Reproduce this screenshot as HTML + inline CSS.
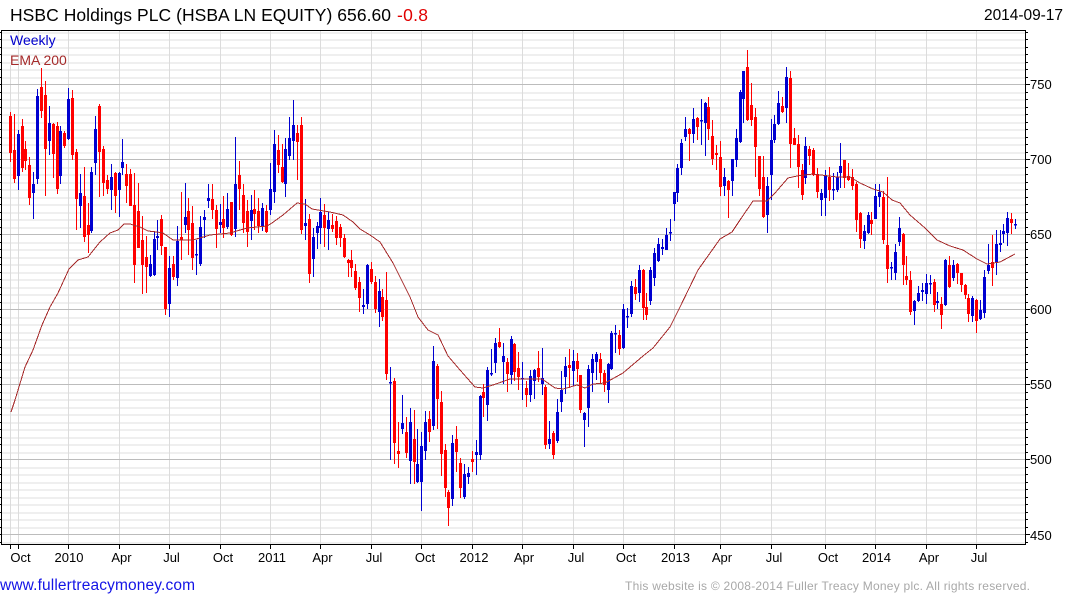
<!DOCTYPE html>
<html><head><meta charset="utf-8"><title>HSBC Holdings PLC</title>
<style>html,body{margin:0;padding:0;background:#fff;width:1075px;height:600px;overflow:hidden}svg{display:block;font-family:"Liberation Sans",Arial,sans-serif}</style>
</head><body>
<svg width="1075" height="600" viewBox="0 0 1075 600" xmlns="http://www.w3.org/2000/svg">
<rect width="1075" height="600" fill="#fff"/>
<!-- minor horizontal grid -->
<path shape-rendering="crispEdges" fill="none" stroke="#efefef" stroke-width="2" d="M2 33H1025M2 40H1025M2 48H1025M2 55H1025M2 63H1025M2 70H1025M2 78H1025M2 93H1025M2 100H1025M2 108H1025M2 115H1025M2 123H1025M2 130H1025M2 138H1025M2 145H1025M2 153H1025M2 168H1025M2 175H1025M2 183H1025M2 190H1025M2 198H1025M2 205H1025M2 213H1025M2 220H1025M2 228H1025M2 243H1025M2 250H1025M2 258H1025M2 265H1025M2 273H1025M2 280H1025M2 288H1025M2 295H1025M2 303H1025M2 318H1025M2 325H1025M2 333H1025M2 340H1025M2 348H1025M2 355H1025M2 363H1025M2 370H1025M2 378H1025M2 393H1025M2 400H1025M2 408H1025M2 415H1025M2 423H1025M2 430H1025M2 438H1025M2 445H1025M2 453H1025M2 468H1025M2 475H1025M2 483H1025M2 490H1025M2 498H1025M2 505H1025M2 513H1025M2 520H1025M2 528H1025M2 543H1025"/>
<!-- vertical grid -->
<path shape-rendering="crispEdges" fill="none" stroke="#dcdcdc" stroke-width="1" d="M10.5 65V544M18.5 31V544M68.5 31V544M119.5 31V544M169.5 31V544M220.5 31V544M270.5 31V544M320.5 31V544M371.5 31V544M421.5 31V544M472.5 31V544M522.5 31V544M573.5 31V544M623.5 31V544M674.5 31V544M720.5 31V544M771.5 31V544M825.5 31V544M875.5 31V544M926.5 31V544M976.5 31V544"/>
<!-- major horizontal grid -->
<path shape-rendering="crispEdges" fill="none" stroke="#bcbcbc" stroke-width="1" d="M2 84.5H1025M2 159.5H1025M2 234.5H1025M2 309.5H1025M2 384.5H1025M2 459.5H1025M2 534.5H1025"/>
<!-- wicks -->
<path shape-rendering="crispEdges" fill="none" stroke="#0000d0" stroke-width="1" d="M18.5 130V190M33.5 172V219M37.5 89V184M49.5 106V155M60.5 126V184M68.5 88V140M80.5 174V228M91.5 167V233M95.5 116V175M111.5 164V210M119.5 172V217M122.5 139V175M150.5 255V277M154.5 232V276M157.5 220V250M169.5 256V317M177.5 226V286M185.5 183V233M196.5 240V275M200.5 216V266M204.5 210V238M208.5 184V208M220.5 204V233M227.5 193V229M235.5 137V237M251.5 195V240M262.5 203V231M270.5 163V215M274.5 130V203M285.5 138V197M289.5 117V160M293.5 100V160M305.5 199V240M313.5 228V277M317.5 222V249M320.5 198V244M328.5 212V250M363.5 289V314M367.5 264V309M379.5 279V327M390.5 367V460M402.5 395V434M410.5 408V484M417.5 429V483M421.5 432V511M425.5 411V460M433.5 346V430M452.5 435V506M464.5 464V499M468.5 467V484M476.5 440V475M480.5 395V460M487.5 367V421M491.5 349V376M495.5 338V373M503.5 343V384M511.5 336V384M522.5 362V400M530.5 370V402M534.5 369V399M542.5 348V395M549.5 421V449M557.5 399V443M561.5 371V412M565.5 357V394M573.5 350V386M584.5 412V447M588.5 365V427M592.5 354V392M596.5 352V380M608.5 363V403M611.5 331V370M615.5 325V353M623.5 304V349M627.5 308V328M631.5 281V317M639.5 265V302M650.5 267V305M654.5 248V286M658.5 238V262M662.5 239V255M666.5 228V250M670.5 219V241M674.5 192V221M677.5 164V202M681.5 139V175M685.5 117V141M693.5 108V143M701.5 99V145M705.5 102V156M724.5 168V196M732.5 159V196M736.5 129V167M740.5 90V143M743.5 71V123M767.5 177V233M771.5 119V200M774.5 115V143M778.5 91V125M786.5 67V123M805.5 137V184M821.5 189V216M825.5 170V216M833.5 173V200M837.5 172V192M840.5 143V188M864.5 225V249M868.5 212V234M875.5 184V219M879.5 184V207M891.5 262V280M895.5 244V280M899.5 217V246M914.5 300V325M918.5 286V302M922.5 283V301M926.5 274V304M930.5 275V294M937.5 292V309M945.5 259V306M953.5 260V281M972.5 296V322M980.5 300V320M984.5 270V318M988.5 244V274M996.5 230V275M1000.5 230V252M1003.5 224V243M1007.5 212V246M1015.5 219V229"/>
<path shape-rendering="crispEdges" fill="none" stroke="#ff0000" stroke-width="1" d="M10.5 112V162M14.5 114V183M22.5 119V172M25.5 141V170M29.5 157V205M41.5 68V118M45.5 81V196M53.5 123V178M57.5 122V194M64.5 131V148M72.5 90V160M76.5 149V230M84.5 167V242M88.5 203V253M99.5 104V197M103.5 146V196M107.5 175V194M115.5 172V213M126.5 164V203M130.5 169V206M134.5 173V283M138.5 183V248M142.5 216V294M146.5 236V293M161.5 215V255M165.5 247V315M173.5 256V280M181.5 192V260M188.5 198V255M192.5 206V270M212.5 184V219M216.5 205V248M223.5 196V238M231.5 202V236M239.5 161V210M243.5 184V233M247.5 200V247M254.5 190V230M258.5 198V233M266.5 205V233M278.5 135V173M282.5 144V183M297.5 125V180M301.5 117V234M309.5 214V283M324.5 204V247M332.5 214V232M336.5 216V245M340.5 224V247M344.5 234V258M348.5 259V277M351.5 250V277M355.5 264V290M359.5 277V312M371.5 262V284M375.5 276V313M382.5 289V321M386.5 272V380M394.5 378V464M398.5 422V468M406.5 417V458M414.5 410V484M429.5 411V442M437.5 364V429M441.5 391V476M445.5 444V497M448.5 490V526M456.5 426V472M460.5 458V498M472.5 451V472M483.5 384V417M499.5 328V348M507.5 358V392M514.5 343V381M518.5 352V390M526.5 381V407M538.5 351V382M545.5 385V449M553.5 431V459M569.5 349V388M577.5 353V382M580.5 375V413M600.5 353V384M604.5 370V392M619.5 330V355M635.5 279V300M643.5 269V320M646.5 293V320M689.5 128V161M697.5 117V140M708.5 97V140M712.5 120V165M716.5 145V170M720.5 141V196M728.5 180V218M747.5 50V121M751.5 83V126M755.5 108V177M759.5 156V196M763.5 156V218M782.5 97V113M790.5 71V168M794.5 128V145M798.5 135V188M802.5 164V200M809.5 146V165M813.5 148V176M817.5 168V198M829.5 167V201M844.5 160V188M848.5 163V181M852.5 169V190M856.5 182V232M860.5 212V248M871.5 212V235M883.5 191V244M887.5 177V283M903.5 233V285M906.5 256V285M910.5 271V315M934.5 279V312M941.5 297V329M949.5 256V288M957.5 263V284M961.5 273V292M965.5 284V299M968.5 294V322M976.5 299V333M992.5 235V286M1011.5 213V234"/>
<!-- bodies -->
<path shape-rendering="crispEdges" fill="none" stroke="#0000d0" stroke-width="3" d="M18.5 134V176M33.5 184V193M37.5 96V179M49.5 123V141M60.5 131V176M68.5 99V139M80.5 193V206M91.5 172V231M95.5 129V163M111.5 177V190M119.5 173V190M122.5 162V168M150.5 264V276M154.5 239V275M157.5 236V238M169.5 268V304M177.5 241V278M185.5 217V225M196.5 254V255.5M200.5 227V264M204.5 217V220M208.5 198V201M220.5 222V225M227.5 209V227M235.5 184V229M251.5 210V221M262.5 208V226M270.5 189V210M274.5 144V192M285.5 149V184M289.5 138V156M293.5 125V141M305.5 223V226M313.5 237V259M317.5 226V233M320.5 212V228M328.5 220V229M363.5 305V307M367.5 265V304M379.5 291V312M390.5 382V383.5M402.5 423V429M410.5 422V461M417.5 464V482M421.5 446V482M425.5 422V451M433.5 361V426M452.5 443V499M464.5 474V497M468.5 473V477M476.5 452V455M480.5 396V455M487.5 370V405M491.5 373V374.5M495.5 343V363M503.5 356V362M511.5 339V375M522.5 378V379.5M530.5 376V395M534.5 370V381M542.5 378V384M549.5 439V444M557.5 412V441M561.5 390V402M565.5 366V377M573.5 361V371M584.5 413V420M588.5 369V408M592.5 359V373M596.5 354V362M608.5 364V390M611.5 333V369M615.5 333V334.5M623.5 309V348M627.5 316V317.5M631.5 286V314M639.5 270V293M650.5 270V301M654.5 253V278M658.5 244V261M662.5 247V249M666.5 235V250M670.5 232V233.5M674.5 192V204M677.5 168V193M681.5 143V168M685.5 129V137M693.5 119V134M701.5 120V121.5M705.5 103V123M724.5 177V186M732.5 159V181M736.5 138V160M740.5 92V142M743.5 71V99M767.5 186V215M771.5 140V175M774.5 124V140M778.5 103V124M786.5 77V108M805.5 146V178M821.5 193V200M825.5 175V198M833.5 189V190.5M837.5 177V190M840.5 166V173M864.5 231V241M868.5 215V233M875.5 196V219M879.5 192V197M891.5 267V268.5M895.5 252V273M899.5 228V242M914.5 301V311M918.5 293V301M922.5 290V292M926.5 283V294M930.5 283V284.5M937.5 301V303M945.5 260V305M953.5 265V278M972.5 298V316M980.5 310V319M984.5 277V313M988.5 265V271M996.5 244V262M1000.5 243V245M1003.5 231V234M1007.5 218V233M1015.5 224V225.5"/>
<path shape-rendering="crispEdges" fill="none" stroke="#ff0000" stroke-width="3" d="M10.5 116V153M14.5 150V179M22.5 126V168M25.5 149V161M29.5 165V198M41.5 87V111M45.5 95V149M53.5 124V154M57.5 126V189M64.5 133V146M72.5 98V155M76.5 152V199M84.5 196V237M88.5 225V235M99.5 106V152M103.5 149V183M107.5 180V189M115.5 173V196M126.5 174V186M130.5 174V206M134.5 205V265M138.5 211V248M142.5 240V265M146.5 257V267M161.5 219V246M165.5 247V309M173.5 264V277M181.5 237V240M188.5 211V230M192.5 223V258M212.5 199V210M216.5 210V229M223.5 219V228M231.5 202V235M239.5 175V189M243.5 195V223M247.5 211V232M254.5 209V214M258.5 211V226M266.5 211V232M278.5 150V165M282.5 167V182M297.5 133V142M301.5 125V230M309.5 219V274M324.5 215V228M332.5 225V229M336.5 221V238M340.5 227V238M344.5 238V257M348.5 260V263M351.5 260V268M355.5 271V288M359.5 282V298M371.5 269V282M375.5 282V309M382.5 297V317M386.5 300V374M394.5 381V443M398.5 451V454M406.5 432V453M414.5 439V462M429.5 419V432M437.5 366V399M441.5 402V454M445.5 450V488M448.5 492V508M456.5 439V452M460.5 463V488M472.5 459V462M483.5 392V398M499.5 342V347M507.5 362V374M514.5 344V372M518.5 368V377M526.5 388V395M538.5 368V377M545.5 387V445M553.5 433V455M569.5 365V368M577.5 361V369M580.5 375V410M600.5 359V373M604.5 373V385M619.5 335V349M635.5 287V294M643.5 270V308M646.5 307V315M689.5 129V134M697.5 118V127M708.5 107V129M712.5 136V159M716.5 153V155M720.5 157V187M728.5 181V190M747.5 67V120M751.5 105V120M755.5 117V147M759.5 156V189M763.5 177V217M782.5 106V112M790.5 78V144M794.5 138V145M798.5 144V167M802.5 170V195M809.5 149V156M813.5 150V175M817.5 174V192M829.5 177V190M844.5 160V178M848.5 176V180M852.5 177V186M856.5 184V220M860.5 213V239M871.5 220V224M883.5 197V240M887.5 245V269M903.5 234V265M906.5 276V280M910.5 280V312M934.5 282V305M941.5 304V315M949.5 265V287M957.5 264V273M961.5 273V285M965.5 285V295M968.5 298V314M976.5 300V321M992.5 262V268M1011.5 219V223"/>
<!-- EMA -->
<polyline fill="none" stroke="#a52a2a" stroke-width="1" shape-rendering="crispEdges" points="11,412 15,400 25,367 33,350 42,325 50,307 58,293 69,269 78,260 88,257 100,242 110,233 118,230 124,224 130,224 140,227 148,231 157,232 163,233 173,240 193,240 210,235 230,233 247,228 267,226 272,223 283,215 297,203 305,204 312,209 330,212 343,215 353,222 360,229 370,235 380,242 393,263 410,297 418,317 428,330 438,335 448,356 460,370 475,387 483,388 493,385 510,379 542,379 555,388 563,389 577,385 585,388 593,384 605,383 623,373 643,356 653,348 670,327 680,307 698,270 720,239 732,232 740,220 753,201 767,201 775,193 788,178 797,176 813,174 837,177 850,177 860,183 873,189 883,192 892,200 900,203 910,215 925,228 937,240 950,246 963,250 977,259 987,264 1000,262 1015,254"/>
<!-- frame -->
<rect x="1.5" y="30.5" width="1024" height="514" fill="none" stroke="#000" stroke-width="1" shape-rendering="crispEdges"/>
<!-- ticks -->
<path id="t" shape-rendering="crispEdges" fill="none" stroke="#000" stroke-width="1" d="M0 32.5h2M0 39.5h2M0 47.5h2M0 54.5h2M0 62.5h2M0 69.5h2M0 77.5h2M0 84.5h2M0 92.5h2M0 99.5h2M0 107.5h2M0 114.5h2M0 122.5h2M0 129.5h2M0 137.5h2M0 144.5h2M0 152.5h2M0 159.5h2M0 167.5h2M0 174.5h2M0 182.5h2M0 189.5h2M0 197.5h2M0 204.5h2M0 212.5h2M0 219.5h2M0 227.5h2M0 234.5h2M0 242.5h2M0 249.5h2M0 257.5h2M0 264.5h2M0 272.5h2M0 279.5h2M0 287.5h2M0 294.5h2M0 302.5h2M0 309.5h2M0 317.5h2M0 324.5h2M0 332.5h2M0 339.5h2M0 347.5h2M0 354.5h2M0 362.5h2M0 369.5h2M0 377.5h2M0 384.5h2M0 392.5h2M0 399.5h2M0 407.5h2M0 414.5h2M0 422.5h2M0 429.5h2M0 437.5h2M0 444.5h2M0 452.5h2M0 459.5h2M0 467.5h2M0 474.5h2M0 482.5h2M0 489.5h2M0 497.5h2M0 504.5h2M0 512.5h2M0 519.5h2M0 527.5h2M0 534.5h2M0 542.5h2"/>
<use href="#t" x="1026"/>
<path shape-rendering="crispEdges" fill="none" stroke="#000" stroke-width="1" d="M1026 84.5h4M1026 159.5h4M1026 234.5h4M1026 309.5h4M1026 384.5h4M1026 459.5h4M1026 534.5h4M10.5 545v4M18.5 545v4M68.5 545v4M119.5 545v4M169.5 545v4M220.5 545v4M270.5 545v4M320.5 545v4M371.5 545v4M421.5 545v4M472.5 545v4M522.5 545v4M573.5 545v4M623.5 545v4M674.5 545v4M720.5 545v4M771.5 545v4M825.5 545v4M875.5 545v4M926.5 545v4M976.5 545v4"/>
<!-- title -->
<text x="10" y="21" font-size="17.5" fill="#000" textLength="381" lengthAdjust="spacing">HSBC Holdings PLC (HSBA LN EQUITY) 656.60</text>
<text x="397" y="21" font-size="17.5" fill="#e00000" textLength="31" lengthAdjust="spacing">-0.8</text>
<text x="984" y="20" font-size="15.5" fill="#000" textLength="79" lengthAdjust="spacing">2014-09-17</text>
<text x="10" y="45" font-size="14" fill="#0000cd">Weekly</text>
<text x="10" y="65" font-size="14" fill="#a52a2a">EMA 200</text>
<!-- y labels -->
<g font-size="13" fill="#000">
<text x="1030" y="89">750</text><text x="1030" y="164">700</text><text x="1030" y="239">650</text><text x="1030" y="314">600</text><text x="1030" y="389">550</text><text x="1030" y="464">500</text><text x="1030" y="540">450</text>
</g>
<!-- x labels -->
<g font-size="13" fill="#000" text-anchor="middle">
<text x="20.5" y="562">Oct</text><text x="69" y="562">2010</text><text x="121.5" y="562">Apr</text><text x="171.5" y="562">Jul</text><text x="223" y="562">Oct</text><text x="272" y="562">2011</text><text x="322.5" y="562">Apr</text><text x="374" y="562">Jul</text><text x="425" y="562">Oct</text><text x="474" y="562">2012</text><text x="524" y="562">Apr</text><text x="576" y="562">Jul</text><text x="626" y="562">Oct</text><text x="675.5" y="562">2013</text><text x="722" y="562">Apr</text><text x="774" y="562">Jul</text><text x="828" y="562">Oct</text><text x="876.5" y="562">2014</text><text x="929" y="562">Apr</text><text x="979" y="562">Jul</text>
</g>
<!-- footer -->
<text x="0" y="590" font-size="15.5" fill="#1414e6" textLength="195" lengthAdjust="spacing">www.fullertreacymoney.com</text>
<text x="625" y="590" font-size="12" fill="#a8a8a8" textLength="405" lengthAdjust="spacing">This website is © 2008-2014 Fuller Treacy Money plc. All rights reserved.</text>
</svg>
</body></html>
